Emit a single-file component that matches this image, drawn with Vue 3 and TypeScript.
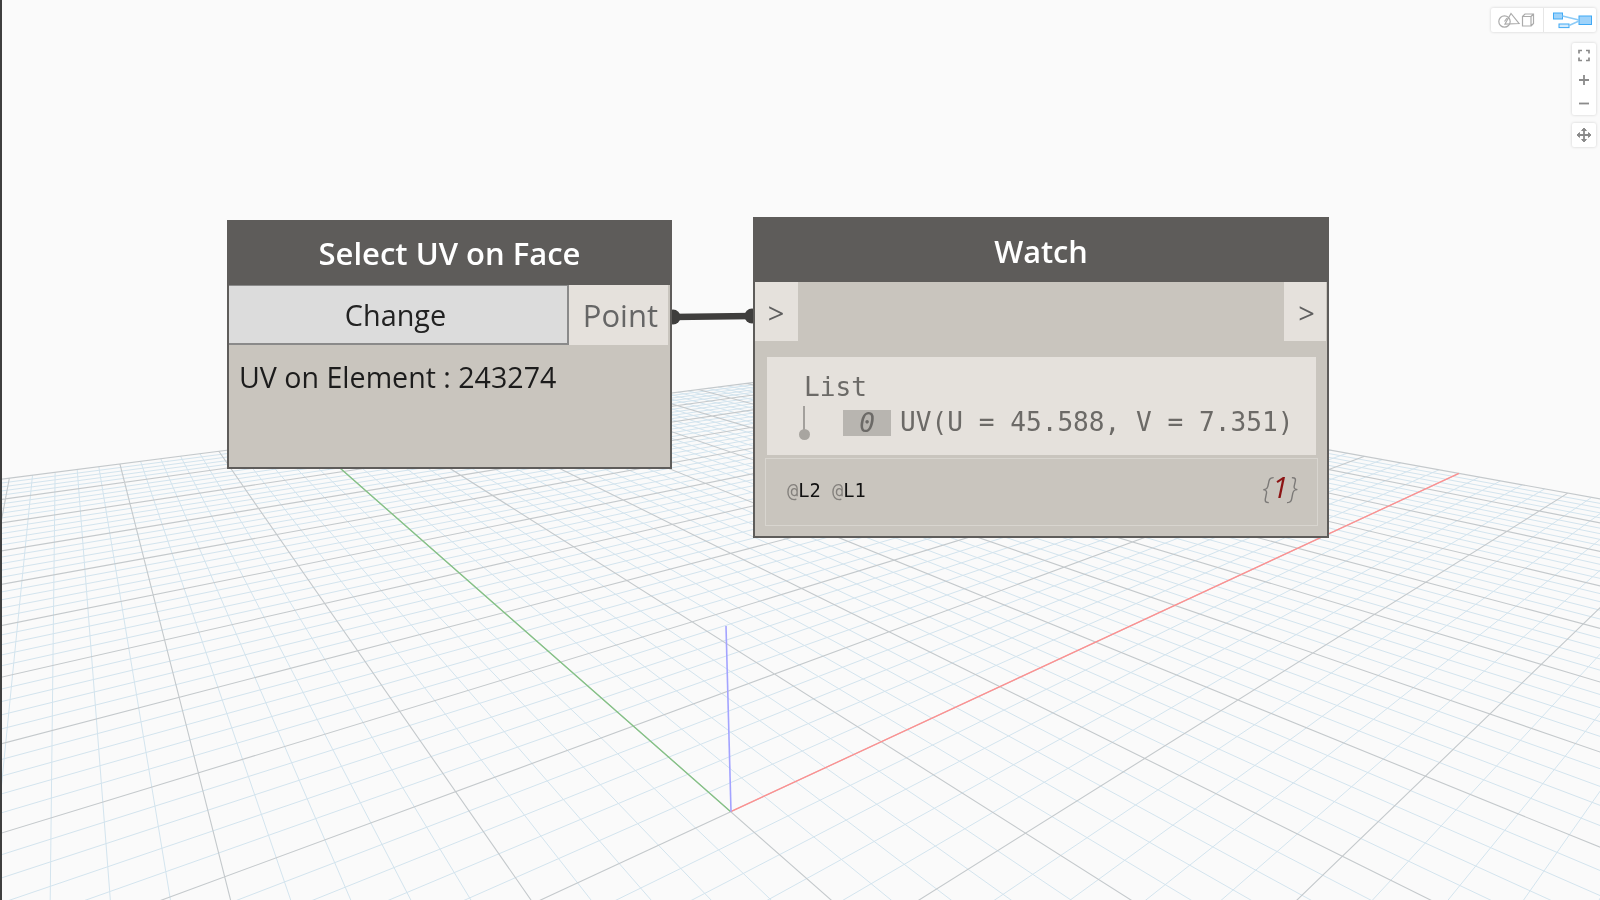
<script setup lang="ts">
const vr = [2000, 222]
const vg = [58, 220]
const o = [730.7, 811.7]
const al = 1.3457 / 50
const be = 1.692 / 50

function project(a: number, b: number): string {
  const ra = a * al
  const rb = b * be
  const w = ra + rb + 1
  const x = (ra * vr[0] + rb * vg[0] + o[0]) / w
  const y = (ra * vr[1] + rb * vg[1] + o[1]) / w
  return `${x.toFixed(2)} ${y.toFixed(2)}`
}

const near = 0.12

function segA(a: number): string {
  let b0 = -50
  const w0 = a * al + b0 * be + 1
  if (w0 < near) b0 = (near - 1 - a * al) / be
  return `M${project(a, b0)}L${project(a, 50)}`
}

function segB(b: number): string {
  let a0 = -50
  const w0 = a0 * al + b * be + 1
  if (w0 < near) a0 = (near - 1 - b * be) / al
  return `M${project(a0, b)}L${project(50, b)}`
}

let minor = ''
let major = ''
for (let i = -50; i <= 50; i++) {
  const d = segA(i) + segB(i)
  if (i % 5 === 0) major += d
  else minor += d
}
const redAxis = `M${project(0, 0)}L${project(50, 0)}`
const greenAxis = `M${project(0, 0)}L${project(0, 50)}`
</script>

<template>
  <div class="canvas">
    <svg class="layer" width="1600" height="900" viewBox="0 0 1600 900">
      <path :d="minor" class="minor" />
      <path :d="major" class="major" />
      <path :d="greenAxis" class="green" />
      <path :d="redAxis" class="red" />
      <path d="M731 811.7L726 626" class="blue" />
      <circle cx="673" cy="317" r="7.5" fill="#3f3e3d" />
      <circle cx="752" cy="316" r="7.5" fill="#3f3e3d" />
      <path d="M673 317L752 316" stroke="#3f3e3d" stroke-width="6.5" fill="none" />
    </svg>

    <div class="edge"></div>

    <section class="node select">
      <header class="title">Select UV on Face</header>
      <div class="row">
        <div class="change"><span>Change</span></div>
        <div class="port-name">Point</div>
      </div>
      <div class="value">UV on Element : 243274</div>
    </section>

    <section class="node watch">
      <header class="title">Watch</header>
      <div class="ports">
        <div class="port">&gt;</div>
        <div class="port">&gt;</div>
      </div>
      <div class="panel">
        <div class="list-label">List</div>
        <div class="list-row">
          <div class="tree"><i class="stem"></i><i class="dot"></i></div>
          <span class="index">0</span>
          <span class="item">UV(U = 45.588, V = 7.351)</span>
        </div>
      </div>
      <div class="levels">
        <div class="lv"><span class="at">@</span>L2 <span class="at">@</span>L1</div>
        <div class="count">{<b>1</b>}</div>
      </div>
    </section>

    <div class="tool modes">
      <div class="seg first">
        <svg width="40" height="24" viewBox="0 0 40 24" fill="none" stroke="#ababab" stroke-width="1.2">
          <circle cx="13.5" cy="13.5" r="5.7" />
          <path d="M13.5 13.5L16 10M14 16L20 5.5L28 15.5Z" />
          <path d="M31.5 8.5H40V18H31.5ZM31.5 8.5L34 6H42.5V15.5L40 18M40 8.5L42.5 6" />
        </svg>
      </div>
      <div class="seg">
        <svg width="52" height="24" viewBox="0 0 52 24" fill="none" stroke="#3fa9f5" stroke-width="1">
          <rect x="9.5" y="5" width="9" height="6" fill="#9fd3fa" />
          <rect x="15" y="16" width="10" height="3.6" fill="#d4ebfc" />
          <rect x="35" y="8" width="12.5" height="8.5" fill="#9fd3fa" />
          <path d="M18.5 8L35 12M25 17.5L35 13" stroke="#8ccbf7" stroke-width="1.4" />
        </svg>
      </div>
    </div>

    <div class="tool zoom">
      <svg width="24" height="24" viewBox="0 0 24 24" fill="none" stroke="#8b8b8b" stroke-width="1.7">
        <path d="M7 10.5V7.5H10M14 7.5H17V10.5M17 14.5V17.5H14M10 17.5H7V14.5" />
      </svg>
      <svg width="24" height="24" viewBox="0 0 24 24" stroke="#8b8b8b" stroke-width="1.8">
        <path d="M7 13H17M12 8V18" />
      </svg>
      <svg width="24" height="24" viewBox="0 0 24 24" stroke="#8b8b8b" stroke-width="1.8">
        <path d="M7 12.5H17" />
      </svg>
    </div>

    <div class="tool pan">
      <svg width="24" height="24" viewBox="0 0 24 24" fill="#8b8b8b" stroke="#8b8b8b" stroke-width="1.8">
        <path d="M12 6.5V17.5M6.5 12H17.5" fill="none" />
        <path d="M12 5L9.6 7.5H14.4ZM12 19L9.6 16.5H14.4ZM5 12L7.5 9.6V14.4ZM19 12L16.5 9.6V14.4Z" stroke-width="1" />
      </svg>
    </div>
  </div>
</template>

<style>
html, body { margin: 0; background: #fafafa; overflow: hidden; }
</style>

<style scoped>
.canvas {
  position: relative;
  width: 1600px;
  height: 900px;
  overflow: hidden;
  background: #fafafa;
  font-family: "Open Sans", sans-serif;
  filter: blur(0.4px);
}
.layer { position: absolute; left: 0; top: 0; }
.minor { stroke: #d3e4ee; stroke-width: 1; fill: none; }
.major { stroke: #c4c9cc; stroke-width: 1.1; fill: none; }
.green { stroke: #83c283; stroke-width: 1.3; fill: none; }
.red { stroke: #ff8f8f; stroke-width: 1.3; fill: none; }
.blue { stroke: #a3a3ff; stroke-width: 1.6; fill: none; }
.edge { position: absolute; left: 0; top: 0; width: 2px; height: 900px; background: #3f3f3f; }

.node {
  position: absolute;
  box-sizing: border-box;
  display: flex;
  flex-direction: column;
  background: #c9c5be;
  border: 2px solid #5e5c5a;
}
.select { left: 227px; top: 220px; width: 445px; height: 249px; }
.watch { left: 753px; top: 217px; width: 576px; height: 321px; }
.title {
  background: #5e5c5a;
  color: #fff;
  font-weight: 600;
  font-size: 31px;
  text-align: center;
  height: 63px;
  line-height: 62px;
  flex: none;
}
.row { display: flex; height: 60px; flex: none; }
.change {
  box-sizing: border-box;
  width: 340px;
  border: 1px solid #8a8a8a;
  border-width: 1px 2px 2px 0;
  background: #dcdcdc;
  color: #222;
  font-size: 28.8px;
  text-align: center;
  line-height: 58px;
}
.change span { margin-right: 5px; }
.port-name {
  flex: 1;
  margin-right: 2px;
  background: #e5e1dc;
  color: #666;
  font-size: 31px;
  text-align: right;
  padding-right: 10px;
  line-height: 60px;
}
.value { padding: 12px 0 0 10px; font-size: 28.6px; color: #1c1c1c; line-height: 40px; }

.watch .title { height: 63px; line-height: 65px; font-size: 30.7px; }
.ports { display: flex; justify-content: space-between; height: 59px; padding-right: 1px; flex: none; }
.port {
  width: 43px;
  background: #e5e1dc;
  color: #5f5f5f;
  font-size: 29px;
  text-align: center;
  line-height: 61px;
}
.port:first-child { text-indent: -1px; }
.port:last-child { width: 42px; text-indent: 3px; }
.panel {
  box-sizing: border-box;
  height: 98px;
  margin: 16px 11px 0 12px;
  background: #e5e1dc;
  color: #6c6a67;
  font-family: "DejaVu Sans Mono", monospace;
  font-size: 26.15px;
  flex: none;
}
.list-label { padding: 15px 0 0 37px; line-height: 30px; height: 30px; }
.list-row { display: flex; align-items: center; height: 36px; margin-top: 2px; }
.tree { position: relative; width: 76px; height: 36px; flex: none; }
.stem { position: absolute; left: 36px; top: 2px; width: 2px; height: 26px; background: #a3a09c; }
.dot { position: absolute; left: 32px; top: 25px; width: 11px; height: 11px; border-radius: 50%; background: #a8a5a0; }
.index {
  width: 48px;
  height: 26px;
  line-height: 26px;
  background: #b8b5b0;
  font-style: italic;
  text-align: center;
  margin-right: 9px;
  flex: none;
  margin-top: 1px;
}
.item { white-space: pre; }
.levels {
  box-sizing: border-box;
  display: flex;
  justify-content: space-between;
  align-items: center;
  height: 68px;
  margin: 3px 9px 0 10px;
  padding: 0 19px 4px 21px;
  border: 1px solid #d8d5cf;
  flex: none;
}
.lv { font-family: "DejaVu Sans Mono", monospace; font-size: 18.7px; color: #111; }
.at { color: #84817d; }
.count { font-size: 29px; line-height: 34px; margin-top: -6px; font-style: italic; color: #7b7977; font-weight: 300; }
.count b { font-weight: 400; color: #8c1414; }

.tool {
  position: absolute;
  background: #fff;
  border-radius: 2px;
  box-shadow: 0 0 3px rgba(0, 0, 0, 0.18);
}
.modes { left: 1491px; top: 8px; width: 105px; height: 24px; display: flex; }
.seg { width: 52px; height: 24px; }
.seg.first { width: 52px; border-right: 1px solid #e6e6e6; }
.seg svg { display: block; overflow: visible; }
.zoom { left: 1572px; top: 43px; width: 24px; height: 72px; display: flex; flex-direction: column; }
.zoom svg, .pan svg { display: block; }
.pan { left: 1572px; top: 123px; width: 24px; height: 24px; }
</style>
